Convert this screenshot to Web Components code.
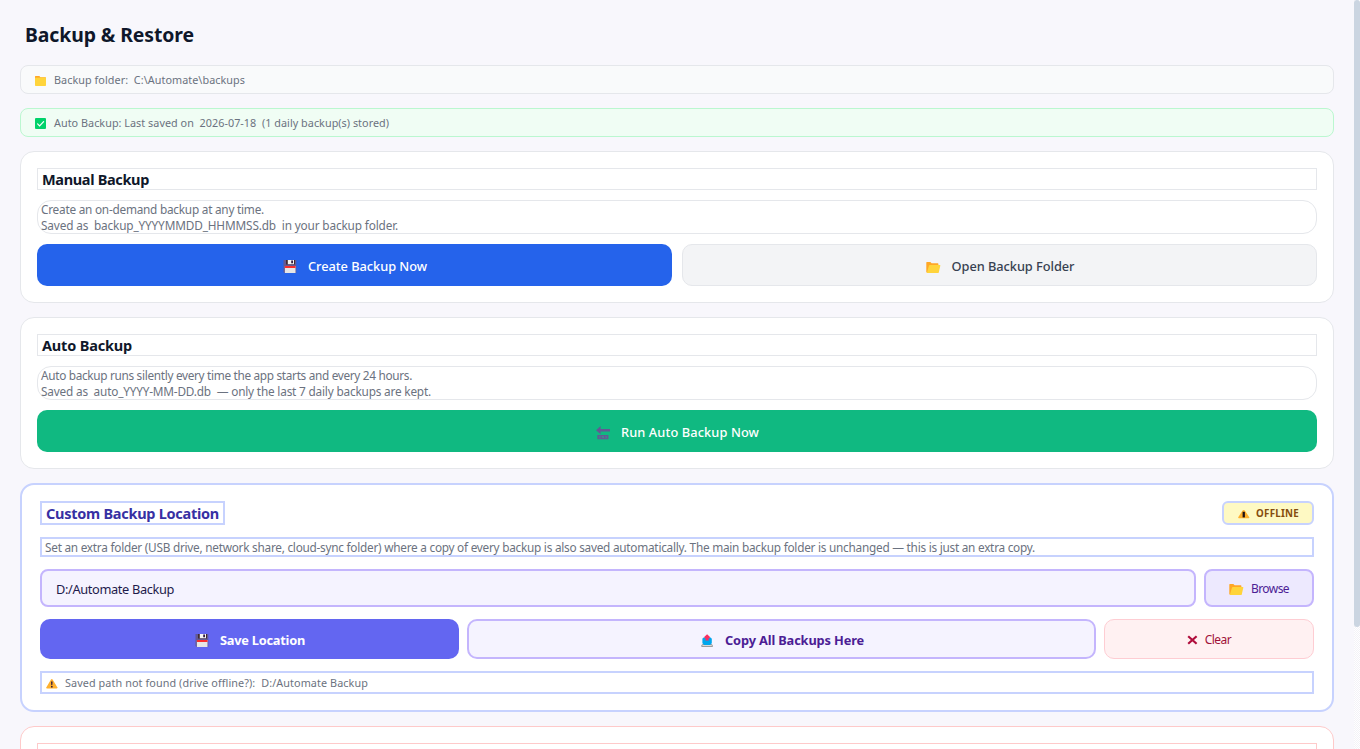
<!DOCTYPE html>
<html lang="en">
<head>
<meta charset="utf-8">
<title>Backup &amp; Restore</title>
<style>
	html, body {
		margin: 0;
		height: 100%;
		overflow: hidden;
	}
	body {
		background: #f8f7fc;
		color: #6b7280;
		font-family: "Noto Sans", "Open Sans", sans-serif;
	}
</style>
</head>
<body>
<backup-page>
	<text-run slot="title" size="19.4" weight="700" width="169">Backup &amp; Restore</text-run>

	<info-bar>
		<ui-icon slot="icon" name="folder"></ui-icon>
		<text-run size="10.8" width="191">Backup folder:  C:\Automate\backups</text-run>
	</info-bar>
	<info-bar tone="ok">
		<ui-icon slot="icon" name="check"></ui-icon>
		<text-run size="10.8" width="335">Auto Backup: Last saved on  2026-07-18  (1 daily backup(s) stored)</text-run>
	</info-bar>

	<backup-card>
		<card-heading><text-run size="14.5" weight="700" width="107">Manual Backup</text-run></card-heading>
		<card-hint>
			<text-run size="11.8" width="223">Create an on-demand backup at any time.</text-run>
			<text-run size="11.8" width="357">Saved as  backup_YYYYMMDD_HHMMSS.db  in your backup folder.</text-run>
		</card-hint>
		<button-row>
			<action-button kind="primary">
				<ui-icon slot="icon" name="floppy"></ui-icon>
				<text-run size="12.8" weight="500" width="119">Create Backup Now</text-run>
			</action-button>
			<action-button kind="neutral">
				<ui-icon slot="icon" name="open-folder"></ui-icon>
				<text-run size="12.8" weight="500" width="123">Open Backup Folder</text-run>
			</action-button>
		</button-row>
	</backup-card>

	<backup-card>
		<card-heading><text-run size="14.5" weight="700" width="90">Auto Backup</text-run></card-heading>
		<card-hint>
			<text-run size="11.8" width="371">Auto backup runs silently every time the app starts and every 24 hours.</text-run>
			<text-run size="11.8" width="390">Saved as  auto_YYYY-MM-DD.db  — only the last 7 daily backups are kept.</text-run>
		</card-hint>
		<button-row>
			<action-button kind="success">
				<ui-icon slot="icon" name="end-arrow"></ui-icon>
				<text-run size="12.8" weight="500" width="138">Run Auto Backup Now</text-run>
			</action-button>
		</button-row>
	</backup-card>

	<location-card>
		<text-run slot="heading" size="14.5" weight="700" width="173">Custom Backup Location</text-run>
		<ui-icon slot="badge" name="badge-warning"></ui-icon>
		<text-run slot="badge" size="9.8" weight="700" width="43">OFFLINE</text-run>
		<text-run slot="hint" size="11.8" width="990">Set an extra folder (USB drive, network share, cloud-sync folder) where a copy of every backup is also saved automatically. The main backup folder is unchanged — this is just an extra copy.</text-run>
		<text-run slot="path" size="12.8" width="118">D:/Automate Backup</text-run>
		<action-button slot="browse" kind="browse">
			<ui-icon slot="icon" name="open-folder"></ui-icon>
			<text-run size="12" width="38">Browse</text-run>
		</action-button>
		<action-button slot="actions" kind="save">
			<ui-icon slot="icon" name="floppy"></ui-icon>
			<text-run size="12.8" weight="700" width="85">Save Location</text-run>
		</action-button>
		<action-button slot="actions" kind="copy">
			<ui-icon slot="icon" name="outbox"></ui-icon>
			<text-run size="12.8" weight="700" width="139">Copy All Backups Here</text-run>
		</action-button>
		<action-button slot="actions" kind="danger">
			<ui-icon slot="icon" name="cross"></ui-icon>
			<text-run size="12" width="26.5">Clear</text-run>
		</action-button>
		<ui-icon slot="status" name="warning"></ui-icon>
		<text-run slot="status" size="10.8" width="303">Saved path not found (drive offline?):  D:/Automate Backup</text-run>
	</location-card>

	<backup-card tone="danger">
		<card-heading></card-heading>
		<card-hint></card-hint>
	</backup-card>
</backup-page>

<script>
const define = (name, html, setup) => {
	const template = document.createElement('template');
	template.innerHTML = html;
	customElements.define(name, class extends HTMLElement {
		constructor() {
			super();
			this.attachShadow({mode: 'open'}).append(template.content.cloneNode(true));
		}
		connectedCallback() {
			if (setup) setup(this);
		}
	});
};

// One line of text, tracked so that it fills its width attribute
define('text-run', `
	<style>
		:host {
			display: block;
			flex: none;
		}
		span {
			display: block;
			width: max-content;
			white-space: pre;
		}
	</style>
	<span><slot></slot></span>
`, (el) => {
	const span = el.shadowRoot.querySelector('span');
	const count = el.textContent.length;
	const width = parseFloat(el.getAttribute('width'));
	el.style.fontSize = el.getAttribute('size') + 'px';
	el.style.fontWeight = el.getAttribute('weight') || 400;
	const natural = span.getBoundingClientRect().width;
	if (!natural || !count) return;
	const tracking = (width - natural) / count;
	span.style.letterSpacing = tracking.toFixed(4) + 'px';
	el.style.width = width + 'px';
});

const icons = {
	'folder': [12, 12, `
		<path fill="#ffa726" d="M0 1.6Q0 1 .6 1H4.4L5.4 2.2H10.4Q11 2.2 11 2.8V6H0Z"/>
		<rect y="2.5" width="11" height="8.5" rx=".7" fill="#ffd43b"/>
		<path fill="#ffb02e" d="M0 2.6H4.2L5.4 1.9H0Z"/>`],
	'check': [12, 12, `
		<rect width="11" height="11" rx="1" fill="#00d26a"/>
		<path d="M2.6 5.8 4.6 7.8 8.6 3.6" fill="none" stroke="#fff" stroke-width="1.2" stroke-linecap="round"/>`],
	'floppy': [14, 14, `
		<path fill="#635994" d="M1 0H13.3V13H1.6L.5 12V.6Z"/>
		<path fill="#402a32" d="M3 0H12V4.5H3Z"/>
		<path fill="#f4f4f4" d="M4.8 0H11V4.2H4.8Z"/>
		<path fill="#321b41" d="M8.2 .4H10V3.2H8.2Z"/>
		<path fill="#e6e6e6" d="M1.9 6H12.5V13H1.9Z"/>
		<path fill="#f92f2f" d="M1.9 6H12.5V8H1.9Z"/>`],
	'open-folder': [15, 13, `
		<path fill="#ffa726" d="M.3 1.6Q.3 1 .9 1H4.4L5.6 2.3H11.8Q12.4 2.3 12.4 2.9V11.6H1Q.3 11.6 .3 11Z"/>
		<path fill="#ffd43b" d="M3.9 4H13.9Q14.5 4 14.3 4.7L12.8 11.3Q12.6 12 12 12H1.2Q.8 12 1 11.3L3 4.6Q3.2 4 3.9 4Z"/>`],
	'end-arrow': [14, 14, `
		<path fill="#635994" d="M0 4.2 4.6 0V2.9H14V5.5H4.6V8.3ZM1.4 9H12.4V13.2H1.4Z"/>
		<path stroke="#3e8e8e" stroke-width=".8" fill="none" d="M2.8 10.3H4.8M2.8 11.9H4.8M6.3 12.1V10.2L7.5 12V10.1M9.2 10.3H10.4V12H9.2"/>`],
	'outbox': [14, 14, `
		<path fill="#9b9b9b" d="M2.6 10H11.6L12.8 11.3V13H1.4V11.3Z"/>
		<path fill="#d8d8d8" d="M2.4 11H11.8V12H2.4Z"/>
		<path fill="#00a6ed" d="M3.6 3.4H10.6L11.8 4.8V9.2L10 11H4.2L2.4 9.2V4.8Z"/>
		<path fill="#f92f60" d="M7.1 .2 9.8 2.8V4.2H8.7V6.4H5.5V4.2H4.4V2.8Z"/>`],
	'warning': [12, 12, `
		<path fill="#ffb02e" d="M5 1.4Q5.8.4 6.6 1.4L11.3 9.2Q11.6 10.4 10.6 10.4H1Q0 10.4.4 9.2Z"/>
		<path fill="#321b41" d="M5 3.6H6.6L6.3 7.2H5.3ZM5 8H6.6V9.4H5Z"/>`],
	'badge-warning': [12, 12, `
		<path fill="#ffb02e" d="M4.6 2.4Q5.6 1.4 6.8 2.4L11.3 9.2Q11.6 10.2 10.6 10.2H1Q0 10.2.2 9.2Z"/>
		<path fill="#1c1017" d="M4.6 3.8H6.9V9.4H4.6Z"/>`],
	'cross': [11, 12, `
		<path d="M1.2 2.2 9.6 9.8M9.6 2.2 1.2 9.8" stroke="#b00d3c" stroke-width="2.2" fill="none"/>`]
};

define('ui-icon', `
	<style>
		:host {
			display: block;
			flex: none;
		}
		svg {
			display: block;
		}
	</style>
	<svg xmlns="http://www.w3.org/2000/svg"></svg>
`, (el) => {
	const [width, height, body] = icons[el.getAttribute('name')];
	const svg = el.shadowRoot.querySelector('svg');
	svg.setAttribute('width', width);
	svg.setAttribute('height', height);
	svg.setAttribute('viewBox', `0 0 ${width} ${height}`);
	svg.innerHTML = body;
});

define('info-bar', `
	<style>
		:host {
			display: flex;
			align-items: center;
			gap: 7px;
			box-sizing: border-box;
			height: 29px;
			margin-bottom: 14px;
			padding: 0 14px;
			border: 1px solid #e5e7eb;
			border-radius: 8px;
			background: #f9fafb;
			line-height: 15px;
		}
		:host([tone="ok"]) {
			border-color: #bbf7d0;
			background: #f0fdf4;
		}
		.icon {
			padding-top: 2px;
		}
	</style>
	<div class="icon"><slot name="icon"></slot></div>
	<slot></slot>
`);

define('backup-card', `
	<style>
		:host {
			display: flex;
			flex-direction: column;
			gap: 10px;
			box-sizing: border-box;
			margin-bottom: 14px;
			padding: 16px;
			border: 1px solid #e5e7eb;
			border-radius: 14px;
			background: #fff;
			--line: #e5e7eb;
		}
		:host([tone="danger"]) {
			border-color: #fecaca;
			--line: #fecaca;
		}
	</style>
	<slot></slot>
`);

define('card-heading', `
	<style>
		:host {
			display: block;
			box-sizing: border-box;
			height: 22px;
			padding-left: 4px;
			border: 1px solid var(--line);
			color: #0f172a;
			line-height: 21px;
		}
	</style>
	<slot></slot>
`);

define('card-hint', `
	<style>
		:host {
			display: block;
			box-sizing: border-box;
			height: 34px;
			padding-left: 3px;
			border: 1px solid var(--line);
			border-radius: 14px;
			line-height: 16px;
		}
	</style>
	<slot></slot>
`);

define('button-row', `
	<style>
		:host {
			display: flex;
			gap: 10px;
		}
	</style>
	<slot></slot>
`);

define('action-button', `
	<style>
		:host {
			display: flex;
			flex: 1 1 0;
			min-width: 0;
		}
		button {
			display: flex;
			flex: 1;
			align-items: center;
			justify-content: center;
			gap: 11px;
			box-sizing: border-box;
			height: 42px;
			margin: 0;
			padding: 2px 0 0 1px;
			border: 0 solid transparent;
			border-radius: 10px;
			background: #2563eb;
			color: #fff;
			font: inherit;
			line-height: 18px;
			cursor: pointer;
		}
		.icon {
			padding-top: 2px;
		}
		:host([kind="neutral"]) button {
			border: 1px solid #e5e7eb;
			background: #f3f4f6;
			color: #374151;
		}
		:host([kind="success"]) button {
			background: #10b981;
		}
		:host([kind="browse"]) button {
			height: 38px;
			gap: 7px;
			padding: 2px 0 0;
			border: 2px solid #c4b5fd;
			border-radius: 8px;
			background: #ede9fe;
			color: #4c1d95;
		}
		:host([kind="browse"]) .icon {
			padding-top: 1px;
		}
		:host([kind="save"]) {
			flex: none;
			width: 419px;
		}
		:host([kind="save"]) button {
			height: 40px;
			background: #6366f1;
		}
		:host([kind="copy"]) button {
			height: 40px;
			border: 2px solid #c4b5fd;
			background: #f5f3ff;
			color: #4c1d95;
		}
		:host([kind="danger"]) {
			flex: none;
			width: 210px;
		}
		:host([kind="danger"]) button {
			height: 40px;
			gap: 7px;
			padding: 1px 0 0;
			border: 1px solid #fecdd3;
			background: #fff1f2;
			color: #9f1239;
		}
		:host([kind="danger"]) .icon {
			padding-top: 0;
		}
	</style>
	<button type="button">
		<div class="icon"><slot name="icon"></slot></div>
		<slot></slot>
	</button>
`);

define('location-card', `
	<style>
		:host {
			display: flex;
			flex-direction: column;
			gap: 12px;
			box-sizing: border-box;
			margin-bottom: 14px;
			padding: 16px 18px;
			border: 2px solid #c7d2fe;
			border-radius: 14px;
			background: #fff;
		}
		.head, .row {
			display: flex;
			justify-content: space-between;
		}
		.row {
			gap: 8px;
		}
		.heading, .badge, .hint, .path, .status {
			box-sizing: border-box;
			border: 2px solid #c7d2fe;
		}
		.heading {
			width: 185px;
			height: 24px;
			padding-left: 4px;
			color: #3730a3;
			line-height: 21px;
		}
		.badge {
			display: flex;
			align-items: center;
			gap: 6px;
			width: 92px;
			height: 24px;
			padding: 1px 0 0 14px;
			border-radius: 6px;
			background: #fef9c3;
			color: #854d0e;
			line-height: 14px;
		}
		.hint {
			height: 20px;
			padding-left: 3px;
			line-height: 17px;
		}
		.path {
			flex: 1;
			height: 38px;
			padding-left: 14px;
			border-color: #c4b5fd;
			border-radius: 8px;
			background: #f5f3ff;
			color: #1e1b4b;
			line-height: 36px;
		}
		.browse {
			display: flex;
			width: 110px;
		}
		.status {
			display: flex;
			align-items: center;
			gap: 7px;
			height: 23px;
			padding-left: 4px;
			line-height: 15px;
		}
		.status ::slotted(ui-icon) {
			padding-top: 2px;
		}
	</style>
	<div class="head">
		<div class="heading"><slot name="heading"></slot></div>
		<div class="badge"><slot name="badge"></slot></div>
	</div>
	<div class="hint"><slot name="hint"></slot></div>
	<div class="row">
		<div class="path"><slot name="path"></slot></div>
		<div class="browse"><slot name="browse"></slot></div>
	</div>
	<div class="row"><slot name="actions"></slot></div>
	<div class="status"><slot name="status"></slot></div>
`);

define('backup-page', `
	<style>
		:host {
			display: flex;
			height: 100vh;
			overflow: hidden;
		}
		main {
			flex: 1;
			padding: 20px 20px 0;
		}
		h1 {
			margin: 0 0 15px;
			padding-left: 5px;
			color: #0f172a;
			font-size: inherit;
			font-weight: inherit;
			line-height: 30px;
		}
		.track {
			width: 6px;
			background: repeating-conic-gradient(#fff 0 25%, #f3f2f7 0 50%) 0 0 / 2px 2px;
		}
		.thumb {
			height: 627px;
			border-radius: 3px;
			background: #cbd5e1;
		}
	</style>
	<main>
		<h1><slot name="title"></slot></h1>
		<slot></slot>
	</main>
	<div class="track"><div class="thumb"></div></div>
`);
</script>
</body>
</html>
